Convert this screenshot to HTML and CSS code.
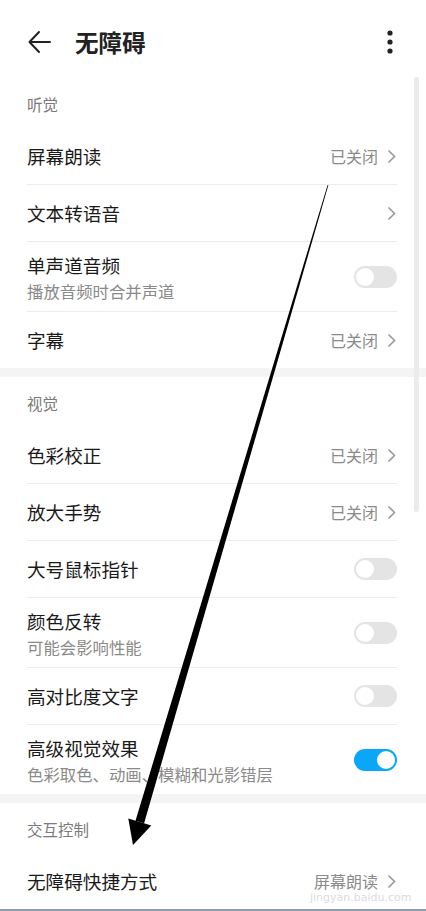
FILE: index.html
```html
<!DOCTYPE html>
<html lang="zh-CN">
<head>
    <meta charset="UTF-8">
    <meta name="viewport" content="width=device-width, initial-scale=1.0">
    <title>无障碍</title>
    <link rel="stylesheet" href="styles.css">
</head>
<body>
    <div class="screen">
        <header class="topbar">
            <svg class="back" width="24" height="24" viewBox="0 0 24 24">
                <path d="M22 12H2M11 2L1.5 12L11 22" fill="none" stroke="#222" stroke-width="2" stroke-linecap="round" stroke-linejoin="round"/>
            </svg>
            <h1>无障碍</h1>
            <svg class="more" width="8" height="24" viewBox="0 0 8 24">
                <circle cx="4" cy="3" r="2.6" fill="#222"/>
                <circle cx="4" cy="12" r="2.6" fill="#222"/>
                <circle cx="4" cy="21" r="2.6" fill="#222"/>
            </svg>
        </header>

        <section class="group">
            <div class="group-title">听觉</div>
            <div class="row">
                <div class="label"><span class="name">屏幕朗读</span></div>
                <span class="value">已关闭</span>
                <svg class="chev" width="9" height="15" viewBox="0 0 9 15"><path d="M1.5 1.5L7.5 7.5L1.5 13.5" fill="none" stroke="#999" stroke-width="1.6"/></svg>
            </div>
            <div class="row">
                <div class="label"><span class="name">文本转语音</span></div>
                <svg class="chev" width="9" height="15" viewBox="0 0 9 15"><path d="M1.5 1.5L7.5 7.5L1.5 13.5" fill="none" stroke="#999" stroke-width="1.6"/></svg>
            </div>
            <div class="row tall">
                <div class="label">
                    <span class="name">单声道音频</span>
                    <span class="sub">播放音频时合并声道</span>
                </div>
                <span class="toggle"></span>
            </div>
            <div class="row last">
                <div class="label"><span class="name">字幕</span></div>
                <span class="value">已关闭</span>
                <svg class="chev" width="9" height="15" viewBox="0 0 9 15"><path d="M1.5 1.5L7.5 7.5L1.5 13.5" fill="none" stroke="#999" stroke-width="1.6"/></svg>
            </div>
        </section>

        <section class="group">
            <div class="group-title">视觉</div>
            <div class="row">
                <div class="label"><span class="name">色彩校正</span></div>
                <span class="value">已关闭</span>
                <svg class="chev" width="9" height="15" viewBox="0 0 9 15"><path d="M1.5 1.5L7.5 7.5L1.5 13.5" fill="none" stroke="#999" stroke-width="1.6"/></svg>
            </div>
            <div class="row">
                <div class="label"><span class="name">放大手势</span></div>
                <span class="value">已关闭</span>
                <svg class="chev" width="9" height="15" viewBox="0 0 9 15"><path d="M1.5 1.5L7.5 7.5L1.5 13.5" fill="none" stroke="#999" stroke-width="1.6"/></svg>
            </div>
            <div class="row">
                <div class="label"><span class="name">大号鼠标指针</span></div>
                <span class="toggle"></span>
            </div>
            <div class="row tall">
                <div class="label">
                    <span class="name">颜色反转</span>
                    <span class="sub">可能会影响性能</span>
                </div>
                <span class="toggle"></span>
            </div>
            <div class="row">
                <div class="label"><span class="name">高对比度文字</span></div>
                <span class="toggle"></span>
            </div>
            <div class="row tall last">
                <div class="label">
                    <span class="name">高级视觉效果</span>
                    <span class="sub">色彩取色、动画、模糊和光影错层</span>
                </div>
                <span class="toggle on"></span>
            </div>
        </section>

        <section class="group">
            <div class="group-title">交互控制</div>
            <div class="row">
                <div class="label"><span class="name">无障碍快捷方式</span></div>
                <span class="value">屏幕朗读</span>
                <svg class="chev" width="9" height="15" viewBox="0 0 9 15"><path d="M1.5 1.5L7.5 7.5L1.5 13.5" fill="none" stroke="#999" stroke-width="1.6"/></svg>
            </div>
        </section>

        <div class="scrollbar"></div>
        <div class="watermark">jingyan.baidu.com</div>

        <!-- annotation arrow drawn over the screenshot -->
        <svg class="arrow" width="426" height="911" viewBox="0 0 426 911">
            <polygon points="327.6,184.9 328.4,185.1 144.1,823.3 135.5,820.7" fill="#000"/>
            <polygon points="133,845 151.3,825.4 128.3,818.6" fill="#000"/>
        </svg>
    </div>
</body>
</html>
```

FILE: styles.css
```css
* {
    box-sizing: border-box;
}
body {
    margin: 0;
    background: #fff;
    font-family: "Noto Sans CJK SC", "Noto Sans", sans-serif;
    color: #1a1a1a;
}
.screen {
    position: relative;
    width: 426px;
    height: 911px;
    overflow: hidden;
    background: #fff;
    border-bottom: 2px solid #8d9db0;
}
.topbar {
    height: 78px;
    display: flex;
    align-items: center;
    padding: 6px 32px 0 28px;
}
.topbar h1 {
    margin: 0 0 0 23px;
    font-size: 23.5px;
    font-weight: 600;
    line-height: 30px;
    color: #222;
    flex: 1;
}
.group {
    background: #fff;
}
.group + .group {
    border-top: 9px solid #f4f4f4;
}
.group-title {
    padding: 16px 27px 14px;
    font-size: 15.5px;
    line-height: 20px;
    color: #7a7a7a;
}
.row {
    margin: 0 29px 0 27px;
    height: 57px;
    display: flex;
    align-items: center;
    border-bottom: 1px solid #ececec;
}
.row.tall {
    height: 70px;
}
.row.last {
    border-bottom: none;
    height: 56px;
}
.row.tall.last {
    height: 69px;
}
.label {
    flex: 1;
    display: flex;
    flex-direction: column;
}
.name {
    font-size: 18.6px;
    line-height: 24px;
}
.sub {
    margin-top: 3px;
    font-size: 16.4px;
    line-height: 22px;
    color: #8a8a8a;
}
.tall .label {
    margin-top: 1px;
}
.value {
    font-size: 16px;
    line-height: 20px;
    color: #8a8a8a;
    margin-right: 9px;
}
.chev {
    margin-right: 1px;
}
.toggle {
    position: relative;
    width: 43px;
    height: 22px;
    border-radius: 11px;
    background: #e4e4e4;
}
.toggle::after {
    content: "";
    position: absolute;
    top: 2px;
    left: 2px;
    width: 18px;
    height: 18px;
    border-radius: 50%;
    background: #fff;
}
.toggle.on {
    background: #0aa6f7;
}
.toggle.on::after {
    left: 23px;
}
.scrollbar {
    position: absolute;
    top: 77px;
    left: 414px;
    width: 5px;
    height: 435px;
    border-radius: 3px;
    background: #ebebeb;
}
.watermark {
    position: absolute;
    top: 892px;
    left: 310px;
    font-family: "DejaVu Sans", sans-serif;
    font-size: 11px;
    line-height: 12px;
    color: #dcdcdc;
}
.arrow {
    position: absolute;
    top: 0;
    left: 0;
}
```
